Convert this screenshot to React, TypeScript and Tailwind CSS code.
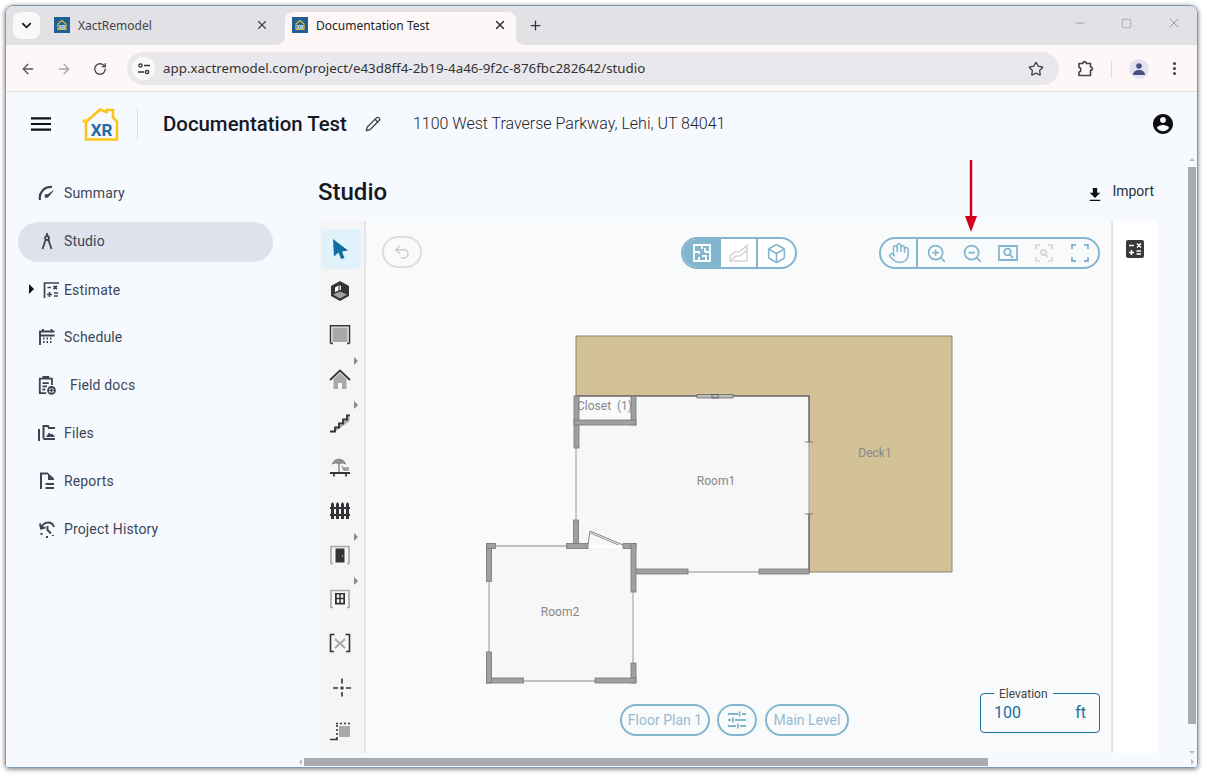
import type { ReactNode } from 'react';
import { ArrowLeft, ArrowRight, RotateCw, X, Plus, ChevronDown, Minus, Square, Star, EllipsisVertical, Pencil, Undo2, Box, Hand, ZoomIn, ZoomOut } from 'lucide-react';

const DARK = '#3f4251';
const BLUE = '#84b5cf';

function Favicon() {
  return (
    <svg width="16" height="16" viewBox="0 0 16 16" className="shrink-0">
      <rect width="16" height="16" fill="#1f5f96" />
      <path d="M4 7 L8 3.5 L12 7 V12.5 H4 Z" fill="none" stroke="#e6b93a" strokeWidth="1.2" />
      <text x="8" y="11.5" textAnchor="middle" fontSize="5" fontWeight="700" fill="#fff" fontFamily="Roboto">XR</text>
    </svg>
  );
}

function Tabs() {
  return (
    <div className="flex h-[39px] shrink-0 bg-[#e1e1e6] pl-[7px] pt-[6px] font-['Noto_Sans',sans-serif] text-[12px]">
      <div className="flex h-[27px] w-[27px] items-center justify-center rounded-lg bg-[#fbf8f9]">
        <ChevronDown size={15} strokeWidth={3} className="text-[#222]" />
      </div>
      <div className="flex h-[33px] w-[245px] items-center pb-[7px] pl-[14px] text-[#444]">
        <Favicon />
        <span className="ml-2 flex-1 pt-px">XactRemodel</span>
        <X size={14} className="mr-[16px] text-[#444]" />
      </div>
      <div className="relative flex h-[33px] w-[231px] items-center rounded-t-lg bg-[#fdf7f8] pb-[7px] pl-[7px] text-[#222]">
        <div className="absolute bottom-0 left-[-8px] h-2 w-2 bg-[radial-gradient(circle_at_0_0,transparent_7.5px,#fdf7f8_8px)]" />
        <div className="absolute bottom-0 right-[-8px] h-2 w-2 bg-[radial-gradient(circle_at_100%_0,transparent_7.5px,#fdf7f8_8px)]" />
        <Favicon />
        <span className="ml-2 flex-1 pt-px">Documentation Test</span>
        <X size={14} strokeWidth={2.5} className="mr-[9px] text-[#333]" />
      </div>
      <div className="flex h-[27px] w-[38px] items-center justify-center">
        <Plus size={15} strokeWidth={2} className="text-[#333]" />
      </div>
      <div className="flex-1" />
      <div className="flex h-[28px] w-[140px] items-center justify-between pb-[6px] pl-[16px] pr-[15px] text-[#777]">
        <Minus size={14} strokeWidth={1} />
        <Square size={11} strokeWidth={1} />
        <X size={16} strokeWidth={1} />
      </div>
    </div>
  );
}

function ChromeBar() {
  return (
    <div className="flex h-[47px] shrink-0 items-center border-b border-[#e6e1e1] bg-[#fdf7f8] pl-[14px] pr-[14px] pt-[1px]">
      <ArrowLeft size={16} strokeWidth={2} className="text-[#555]" />
      <ArrowRight size={16} strokeWidth={2} className="ml-[20px] text-[#a8a8a8]" />
      <RotateCw size={14} strokeWidth={2.2} className="ml-[21px] text-[#444]" />
      <div className="ml-[20px] flex h-[33px] w-[932px] items-center rounded-full bg-[#e9e8ed] pl-[5px] pr-[15px]">
        <div className="flex h-[23px] w-[23px] items-center justify-center rounded-full bg-[#fbf8f9]">
          <svg width="14" height="14" viewBox="0 0 14 14" fill="none" stroke="#333" strokeWidth="1.4">
            <circle cx="3.5" cy="3.5" r="1.6" />
            <path d="M7 3.5h6M1 10h6" />
            <circle cx="10" cy="10" r="1.6" />
          </svg>
        </div>
        <span className="ml-[8px] flex-1 font-['Noto_Sans',sans-serif] text-[13.35px] text-[#333]">
          app.xactremodel.com/project/e43d8ff4-2b19-4a46-9f2c-876fbc282642/studio
        </span>
        <Star size={16} strokeWidth={2} className="text-[#444]" />
      </div>
      {/* extension piece, closer to the browser's own glyph than lucide's Puzzle */}
      <svg width="17" height="17" viewBox="0 0 17 17" fill="none" stroke="#444" strokeWidth="1.600" className="ml-[18px]">
        <path d="M2 3.500H5.800C5.600 1 9.400 1 9.200 3.500H13.500V7C16 6.800 16 10.600 13.500 10.400V15.500H2V12C4.400 12 4.400 7.500 2 7.500Z" strokeLinejoin="round" />
      </svg>
      <div className="ml-[17px] h-[18px] w-px bg-[#d3def0]" />
      <div className="ml-[17px] flex h-5 w-5 items-center justify-center rounded-full bg-[#e2e3ec]">
        <svg width="14" height="14" viewBox="0 0 14 14" fill="#46507e">
          <circle cx="7" cy="4" r="2.8" />
          <path d="M1 13c0-3.5 3-5 6-5s6 1.500 6 5z" />
        </svg>
      </div>
      <EllipsisVertical size={17} strokeWidth={2.4} className="ml-[17px] text-[#444]" />
    </div>
  );
}

function Header() {
  return (
    <div className="flex h-[64px] shrink-0 items-center pl-[25px] pr-[22px]">
      <svg width="20" height="20" viewBox="3 3 18 18" fill="#111">
        <path d="M3 18h18v-2H3v2zm0-5h18v-2H3v2zm0-7v2h18V6H3z" />
      </svg>
      <svg width="38" height="33" viewBox="0 0 38 33" className="ml-[30px]">
        <path d="M5 14V31.500H36V13.500L32 9.500V2H25.500V4L19 1.500L5 14" fill="none" stroke="#fcc419" strokeWidth="2.600" />
        <path d="M0.500 14.500H4.500V9.500Z" fill="#fcc419" />
        <text x="20.500" y="28" textAnchor="middle" fontSize="17" fontWeight="700" fill="#1f6ba5" fontFamily="Roboto">XR</text>
      </svg>
      <div className="ml-[18px] h-[32px] w-px bg-[#dcdfe3]" />
      <span className="ml-[25px] text-[20.4px] font-medium text-[#15191f]">Documentation Test</span>
      <Pencil size={16} strokeWidth={2} className="ml-[18px] text-[#444]" />
      <span className="ml-[32px] text-[16px] font-light text-[#1f2329]">1100 West Traverse Parkway, Lehi, UT 84041</span>
      <div className="flex-1" />
      <svg width="24" height="24" viewBox="0 0 24 24" fill="#0d0d0f">
        <path d="M12 2C6.480 2 2 6.480 2 12s4.480 10 10 10 10-4.480 10-10S17.520 2 12 2zm0 3c1.660 0 3 1.340 3 3s-1.340 3-3 3-3-1.340-3-3 1.340-3 3-3zm0 14.200c-2.500 0-4.710-1.280-6-3.220.030-1.990 4-3.080 6-3.080 1.990 0 5.970 1.090 6 3.080-1.290 1.940-3.500 3.220-6 3.220z" />
      </svg>
    </div>
  );
}

const NAV_ICONS: Record<string, ReactNode> = {
  Summary: (
    <svg width="18" height="16" viewBox="0 0 18 16" fill="none" stroke={DARK} strokeWidth="2.200">
      <path d="M2 15C0.500 8 6 1.500 14 2" />
      <path d="M16.500 4.500L10 9 8 12 11 11.500Z" fill={DARK} stroke="none" />
      <circle cx="8.500" cy="11" r="2" fill={DARK} stroke="none" />
    </svg>
  ),
  Studio: (
    <svg width="18" height="18" viewBox="0 0 18 18" fill="none" stroke={DARK} strokeWidth="1.800">
      <circle cx="9" cy="6" r="2" />
      <path d="M9 1v3M7.500 8L4.500 17M10.500 8L13.500 17" />
    </svg>
  ),
  Estimate: (
    <svg width="18" height="18" viewBox="0 0 18 18" fill="none" stroke={DARK} strokeWidth="1.700">
      <path d="M2.500 17V2H17" />
      <path d="M5.500 6.500H9M11.500 5l3.500 3M15 5l-3.500 3M5 13.500h5M7.500 11v5M12 12h4M12 15h4" />
    </svg>
  ),
  Schedule: (
    <svg width="18" height="18" viewBox="0 0 18 18" fill="none" stroke={DARK} strokeWidth="1.900">
      <path d="M2 17V3.500H16.500M5 1v3M13.500 1v3M2 7.500H16.500" />
      <path d="M5 10.500h2M8.500 10.500h2M12 10.500h2M5 14h2M8.500 14h2M12 14h2" strokeDasharray="1.500 0.500" />
    </svg>
  ),
  'Field docs': (
    <svg width="22" height="24" viewBox="0 0 20 22" fill="none" stroke={DARK} strokeWidth="2">
      <path d="M9 20H2V4H15.500V11M6 4V2H11.500V4" />
      <path d="M5 9H12M5 12.500H10M5 16H8" />
      <circle cx="15" cy="17" r="3.800" />
      <path d="M15 14.500v5M12.500 17h5" strokeWidth="1.600" />
    </svg>
  ),
  Files: (
    <svg width="18" height="18" viewBox="0 0 18 18" fill="none" stroke={DARK} strokeWidth="2">
      <path d="M1 5V17" />
      <path d="M5.500 14.500V2H10L11 4H17M5.500 15H17" />
      <path d="M8 13L11 8.500 13 10.500 14 9.500 17 13Z" fill={DARK} stroke="none" />
    </svg>
  ),
  Reports: (
    <svg width="16" height="18" viewBox="0 0 16 18" fill="none" stroke={DARK} strokeWidth="2">
      <path d="M2 17V1.500H9" />
      <path d="M9 1L15 6.500V8H9Z" fill={DARK} stroke="none" />
      <path d="M6.500 12H15M6.500 16H15" />
    </svg>
  ),
  'Project History': (
    <svg width="18" height="18" viewBox="0 0 18 18" fill="none" stroke={DARK} strokeWidth="2">
      <path d="M3.500 8C5 1.500 13.500 0.500 16 7M2 3.500L3 8.500 7.500 7.500M9.500 6V10L13 13.500M3.500 13V15M8 17H10M15 16V15" />
    </svg>
  ),
};

function NavItem({ name, active, caret, iconGap = 'gap-[8px]', iconShift = '', nudge = '' }: { name: string; active?: boolean; caret?: boolean; iconGap?: string; iconShift?: string; nudge?: string }) {
  return (
    <div className={`relative flex h-[40px] items-center pl-[20px] ${active ? 'mt-px -mb-px rounded-full bg-[#dde2ec] pb-[2px]' : ''} ${nudge}`}>
      {caret && (
        <div className="absolute left-[11px] top-[15px] h-0 w-0 border-y-[5px] border-l-[5px] border-y-transparent border-l-[#111]" />
      )}
      <div className={`flex items-center ${iconGap}`}>
        <div className={`flex w-[18px] items-center justify-center ${iconShift}`}>{NAV_ICONS[name]}</div>
        <span className="text-[14px] tracking-[0.15px] text-[#3c4656]">{name}</span>
      </div>
    </div>
  );
}

function Sidebar() {
  return (
    <div className="flex w-[290px] shrink-0 flex-col gap-2 pl-[12px] pr-[23px] pt-[17px]">
      <NavItem name="Summary" />
      <NavItem name="Studio" active />
      <NavItem name="Estimate" caret iconShift="translate-x-[4px]" nudge="pt-[2px]" />
      <NavItem name="Schedule" />
      <NavItem name="Field docs" iconGap="gap-[14px]" />
      <NavItem name="Files" />
      <NavItem name="Reports" />
      <NavItem name="Project History" />
    </div>
  );
}

const DK = '#333438';
const GR = '#a9a9a9';

const TOOLS: { icon: ReactNode; caret?: boolean; active?: boolean }[] = [
  { active: true, icon: <polygon points="5,2 20,13.500 14,14.500 16.500,21 13,22 10.500,15.500 6,19.500" fill="#0f6fa5" /> },
  {
    icon: (
      <>
        <polygon points="12,2 21,7 21,17 12,22 3,17 3,7" fill={DK} />
        <polygon points="5,15.500 12,12.500 19,15.500 12,19.500" fill="#a0a0a0" />
        <polygon points="7,8.500 10.500,6.500 10.500,11.500 7,13" fill="#fff" />
        <polygon points="13,6.500 13,11 11.500,11 11.500,6.500" fill="#ddd" />
      </>
    ),
  },
  {
    icon: (
      <>
        <rect x="4.500" y="4.500" width="15" height="14.500" fill={GR} />
        <path d="M2.500 20.500V2.750H21.500V20.500M2.500 20.500H5M21.500 20.500H19" fill="none" stroke={DK} strokeWidth="1.500" />
      </>
    ),
  },
  {
    caret: true,
    icon: (
      <>
        <path d="M5.500 12V22H10V16H14V22H18.500V12L12 6Z" fill={GR} />
        <path d="M2 13L12 3.500 22 13" fill="none" stroke={DK} strokeWidth="1.800" />
      </>
    ),
  },
  {
    caret: true,
    icon: (
      <>
        <path d="M6 18H10V14H14V10H18V6H21.500V10L8 20H6Z" fill={GR} />
        <path d="M2 20.500H7V16.500H11V12.500H15V8.500H19V4.500H22" fill="none" stroke={DK} strokeWidth="1.800" />
      </>
    ),
  },
  {
    icon: (
      <>
        <path d="M3.500 9.500C5 5.500 8 3.500 11 3.500S17 5.500 18.500 9.500L14 8.500 11 9.500 8 8.500Z" fill="#8e8e8e" />
        <path d="M11 9V17" stroke="#8e8e8e" strokeWidth="1.500" />
        <path d="M14 11L16 15H21M17 15V13H21" fill="none" stroke="#8e8e8e" strokeWidth="1.500" />
        <path d="M2 18H22" stroke={DK} strokeWidth="2" />
        <path d="M6 18V21.500M18 18V21.500" stroke={DK} strokeWidth="1.600" />
      </>
    ),
  },
  {
    icon: (
      <path
        d="M2 8H22V10H2ZM2 15H22V17H2ZM3 5L4.500 3 6 5V20H3ZM8 5L9.500 3 11 5V20H8ZM13 5L14.500 3 16 5V20H13ZM18 5L19.500 3 21 5V20H18Z"
        fill={DK}
      />
    ),
  },
  {
    caret: true,
    icon: (
      <>
        <path d="M5 20.500H3V3.500H21V20.500H19" fill="none" stroke={GR} strokeWidth="1.600" />
        <rect x="7.500" y="5.500" width="9" height="14" fill={DK} />
        <circle cx="14.500" cy="13" r="0.700" fill="#ccc" />
      </>
    ),
  },
  {
    caret: true,
    icon: (
      <>
        <path d="M5 20.500H3V3.500H21V20.500H19" fill="none" stroke={GR} strokeWidth="1.600" />
        <path d="M7 6H17V17.500H7Z M8.800 7.600V10.800H11.300V7.600Z M12.800 7.600V10.800H15.300V7.600Z M8.800 12.300V15.800H11.300V12.300Z M12.800 12.300V15.800H15.300V12.300Z" fill={DK} fillRule="evenodd" />
      </>
    ),
  },
  {
    icon: (
      <>
        <path d="M7 8L17 17M17 8L7 17" stroke={GR} strokeWidth="2" />
        <path d="M6.500 3.500H2.500V20.500H6M17.500 3.500H21.500V20.500H18" fill="none" stroke={DK} strokeWidth="1.600" />
      </>
    ),
  },
  {
    icon: (
      <>
        <circle cx="14" cy="13" r="1.800" fill="#444" />
        <path d="M14 3.500V8.500M14 17V21.500M5 13H10M18 13H23" stroke={DK} strokeWidth="1.600" />
      </>
    ),
  },
  {
    icon: (
      <>
        <rect x="11" y="7" width="11" height="11" fill={GR} />
        <path d="M2 20.500H9V18" fill="none" stroke={DK} strokeWidth="1.700" />
        <path d="M8 4.500H22M9 6V16" fill="none" stroke={DK} strokeWidth="1.600" strokeDasharray="2 2" />
      </>
    ),
  },
];

function ToolRail() {
  return (
    <div className="flex w-[47px] shrink-0 flex-col gap-1 border-r-2 border-[#e4e4e4] bg-[#f5f5f5] pl-[2px] pt-2">
      {TOOLS.map((t, i) => (
        <div
          key={i}
          className={`relative flex h-[40px] w-[40px] items-center justify-center rounded ${t.active ? '-mb-[2px] bg-[#e0f3fa]' : ''}`}
        >
          {t.caret && (
            <div className="absolute right-[3px] top-[-2px] h-0 w-0 border-y-[4px] border-l-[4px] border-y-transparent border-l-[#8a8a8a]" />
          )}
          <svg width="24" height="24" viewBox="0 0 24 24" className="-translate-x-px">{t.icon}</svg>
        </div>
      ))}
    </div>
  );
}

function Wall({ x, y, w, h }: { x: number; y: number; w: number; h: number }) {
  return <rect x={x} y={y} width={w} height={h} fill="#a0a0a0" stroke="#777" strokeWidth="0.800" />;
}

// drawn in screenshot coordinates, hence the viewBox origin
function FloorPlan() {
  return (
    <svg className="absolute inset-0" width="745" height="532" viewBox="366 221 745 532" fontFamily="Roboto" fontSize="12" fill="#888">
      <path d="M576 336H952V572H809V396H576Z" fill="#d3c198" stroke="#8b8470" strokeWidth="1" />
      <rect x="576" y="396" width="233" height="176" fill="#f7f7f7" />
      <rect x="489" y="546" width="144" height="135" fill="#f7f7f7" />
      <rect x="579" y="398" width="52" height="22" fill="#f9fafb" />

      <path d="M576 396H809V442M809 514V572" fill="none" stroke="#6b6b6b" strokeWidth="1.500" />
      <path d="M809 442V514" stroke="#b5b5b5" strokeWidth="1.500" />
      <path d="M805 442H813M805 514H813" stroke="#666" strokeWidth="0.800" />
      <path d="M576 448V520M688 572H759M633 592V663M524 681H595M489 581V652M496 546H567" stroke="#b0b0b0" strokeWidth="1.300" fill="none" />
      <rect x="697" y="394.500" width="36" height="3.500" fill="#bdbdbd" stroke="#666" strokeWidth="0.800" />
      <rect x="712" y="394.500" width="6" height="3.500" fill="none" stroke="#555" strokeWidth="0.800" />

      <Wall x={574} y={396} w={5} h={52} />
      <Wall x={631} y={396} w={5} h={29} />
      <Wall x={574} y={420} w={62} h={5} />
      <Wall x={759} y={569} w={50} h={5} />
      <Wall x={635} y={569} w={53} h={5} />
      <Wall x={573.500} y={520} w={5} h={26} />
      <Wall x={566.500} y={543.500} w={21.500} h={5} />
      <Wall x={623} y={543.500} w={13} h={5} />
      <Wall x={631} y={543.500} w={5} h={48.500} />
      <Wall x={631} y={663} w={5} h={20} />
      <Wall x={595} y={678} w={41} h={5} />
      <Wall x={486.500} y={678} w={37} h={5} />
      <Wall x={486.500} y={652} w={5} h={31} />
      <Wall x={486.500} y={543.500} w={5} h={38} />
      <Wall x={486.500} y={543.500} w={9} h={5} />

      <path d="M588 544L590 531L623 545" fill="none" stroke="#666" strokeWidth="0.800" />
      <path d="M590.500 533L622 546.500" fill="none" stroke="#777" strokeWidth="0.800" />
      <rect x="589" y="545" width="33" height="3" fill="#fdfdfd" />

      <text x="577" y="410" xmlSpace="preserve">Closet  (1)</text>
      <text x="716" y="485" textAnchor="middle">Room1</text>
      <text x="875" y="457" textAnchor="middle">Deck1</text>
      <text x="560" y="616" textAnchor="middle">Room2</text>
    </svg>
  );
}

function Canvas() {
  return (
    <div className="relative flex-1 bg-[#f9fafc]">
      <FloorPlan />

      {/* red callout arrow */}
      <svg className="absolute left-[597px] top-[-61px]" width="16" height="72" viewBox="0 0 16 72">
        <path d="M8 0V58" stroke="#d0021b" strokeWidth="2.500" />
        <path d="M2 56H14L8 72Z" fill="#d0021b" />
      </svg>

      <div className="absolute left-[16px] top-[15px] flex h-[32px] w-[40px] items-center justify-center rounded-full border-2 border-[#dcdfe0]">
        <Undo2 size={18} strokeWidth={1.900} className="text-[#c8cccc]" />
      </div>

      <div className="absolute left-[315px] top-[16px] flex h-[32px] w-[116px] overflow-hidden rounded-full border-2 border-[#84b5cf] bg-white">
        <div className="flex w-[38px] items-center justify-center bg-[#84b5cf]">
          <svg width="18" height="18" viewBox="0 0 18 18" fill="none" stroke="#fff" strokeWidth="1.800">
            <path d="M1 1H17V17H1ZM9 1V5M1 8H6V10M6 13V17M12 8V4M12 8H17M9 12H13V17" />
          </svg>
        </div>
        <div className="flex w-[37px] items-center justify-center border-r-2 border-[#84b5cf]">
          <svg width="20" height="18" viewBox="0 0 20 18" fill="none" stroke="#d4d4d4" strokeWidth="1.500">
            <path d="M1 12L6 8H10L18 1.500V17H1ZM1 17L7 12H11L18 6" />
          </svg>
        </div>
        <div className="flex flex-1 items-center justify-center">
          <Box size={21} strokeWidth={1.800} className="text-[#84b5cf]" />
        </div>
      </div>

      <div className="absolute left-[513px] top-[16px] flex h-[32px] w-[221px] items-center rounded-full border-2 border-[#84b5cf] bg-[#f9fafc] text-[#84b5cf]">
        <div className="flex h-full w-[37px] items-center justify-center border-r-2 border-[#84b5cf]">
          <Hand size={22} strokeWidth={1.600} />
        </div>
        <div className="flex w-[36px] justify-center"><ZoomIn size={21} strokeWidth={1.900} /></div>
        <div className="flex w-[36px] justify-center"><ZoomOut size={21} strokeWidth={1.900} /></div>
        <div className="flex w-[36px] justify-center">
          <svg width="20" height="18" viewBox="0 0 20 18" fill="none" stroke={BLUE} strokeWidth="1.800">
            <path d="M1 2H19V16H1Z" />
            <circle cx="9.500" cy="8" r="3.300" />
            <path d="M12 10.500L15 14" />
          </svg>
        </div>
        <div className="flex w-[36px] justify-center">
          <svg width="18" height="18" viewBox="0 0 18 18" fill="none" stroke="#d4d4d4" strokeWidth="1.600">
            <path d="M1 5V1H5M13 1H17V5M1 13V17H5M13 17H17V13" />
            <circle cx="8.500" cy="8.500" r="2.600" />
            <path d="M10.500 10.500L13 13" />
          </svg>
        </div>
        <div className="flex w-[36px] justify-center">
          <svg width="18" height="18" viewBox="0 0 18 18" fill="none" stroke={BLUE} strokeWidth="1.800">
            <path d="M1 5V1H5M13 1H17V5M1 13V17H5M13 17H17V13" />
          </svg>
        </div>
      </div>

      <div className="absolute bottom-[17px] left-[254px] flex items-center gap-[7px] text-[14px] text-[#94bdd3]">
        <div className="flex h-[32px] w-[90px] items-center justify-center rounded-full border-2 border-[#84b5cf]">Floor Plan 1</div>
        <div className="flex h-[32px] w-[40px] items-center justify-center rounded-full border-2 border-[#84b5cf]">
          <svg width="20" height="18" viewBox="0 0 20 18" fill="none" stroke={BLUE} strokeWidth="1.800">
            <path d="M1 3H11M15 3H19M12.500 0.500V5.500M1 9H4M8 9H19M6 6.500V11.500M1 15H9M13 15H19M11 12.500V17.500" />
          </svg>
        </div>
        <div className="ml-px flex h-[32px] w-[84px] items-center justify-center rounded-full border-2 border-[#84b5cf]">Main Level</div>
      </div>

      <div className="absolute bottom-[20px] left-[614px] flex h-[40px] w-[120px] items-center justify-between rounded border border-[#1a6f9f] pl-[13px] pr-[13px] text-[16px] text-[#1a6f9f]">
        <span className="absolute left-[13px] top-[-9px] bg-[#f9fafc] px-[5px] text-[12px] text-[#444]">Elevation</span>
        <span>100</span>
        <span>ft</span>
      </div>
    </div>
  );
}

function Main() {
  return (
    <div className="flex min-w-0 flex-1">
      <div className="flex min-w-0 flex-1 flex-col">
        <div className="flex-1 pl-[23px] pr-[30px]">
          <div className="flex h-[65px] items-center justify-between pt-[6px]">
            <h1 className="-ml-px text-[24px] font-medium text-[#15191f]">Studio</h1>
            <div className="mr-[3px] flex items-center gap-[8px] text-[14px] text-[#2b2f36]">
              <svg width="14" height="16" viewBox="0 0 16 18" fill="#111" className="mt-[5px]">
                <path d="M5.500 2H10.500V7.500H14L8 13.500 2 7.500H5.500ZM2 15.500H14V17H2Z" />
              </svg>
              <span className="ml-[2px]">Import</span>
            </div>
          </div>
          <div className="flex h-[532px]">
            <ToolRail />
            <Canvas />
            <div className="flex w-[46px] shrink-0 justify-center border-l-2 border-[#e4e4e4] bg-white pt-[19px]">
              <svg width="18" height="18" viewBox="0 0 18 18">
                <rect width="18" height="18" rx="2" fill="#3a3a3c" />
                <path d="M3 5.500H8M11 3.500L15 7.500M15 3.500L11 7.500M3 12.500H8M5.500 10V15M10.500 11H15M10.500 14H15" stroke="#fff" strokeWidth="1.500" />
              </svg>
            </div>
          </div>
        </div>
        {/* horizontal scrollbar */}
        <div className="flex h-[10px] shrink-0 items-center pl-[3px]">
          <div className="h-0 w-0 border-y-[3px] border-r-[3px] border-y-transparent border-r-[#bbb]" />
          <div className="ml-[2px] h-[8px] w-[684px] bg-[#a8acaf]" />
        </div>
      </div>
      {/* vertical scrollbar */}
      <div className="flex w-[10px] shrink-0 flex-col items-center pt-[2px]">
        <div className="h-0 w-0 border-x-[3px] border-b-[3px] border-x-transparent border-b-[#bbb]" />
        <div className="mt-[6px] h-[557px] w-[8px] bg-[#a8acaf]" />
        <div className="flex-1" />
        <div className="mb-[5px] h-0 w-0 border-x-[3px] border-t-[3px] border-x-transparent border-t-[#bbb]" />
        <div className="mb-[2px] h-0 w-0 border-y-[3px] border-l-[3px] border-y-transparent border-l-[#bbb]" />
      </div>
    </div>
  );
}

export default function App() {
  return (
    <div className="h-[777px] w-[1207px] overflow-hidden bg-white pl-[5px] pt-[5px] font-['Roboto',sans-serif]">
      <div className="flex h-[763px] w-[1193px] flex-col overflow-hidden rounded-t-lg rounded-b border border-[#7d9ab5] shadow-[0_1px_5px_rgba(0,0,0,0.55)]">
        <Tabs />
        <ChromeBar />
        <div className="flex min-h-0 flex-1 flex-col bg-[#f6faff]">
          <Header />
          <div className="flex min-h-0 flex-1">
            <Sidebar />
            <Main />
          </div>
        </div>
      </div>
    </div>
  );
}
